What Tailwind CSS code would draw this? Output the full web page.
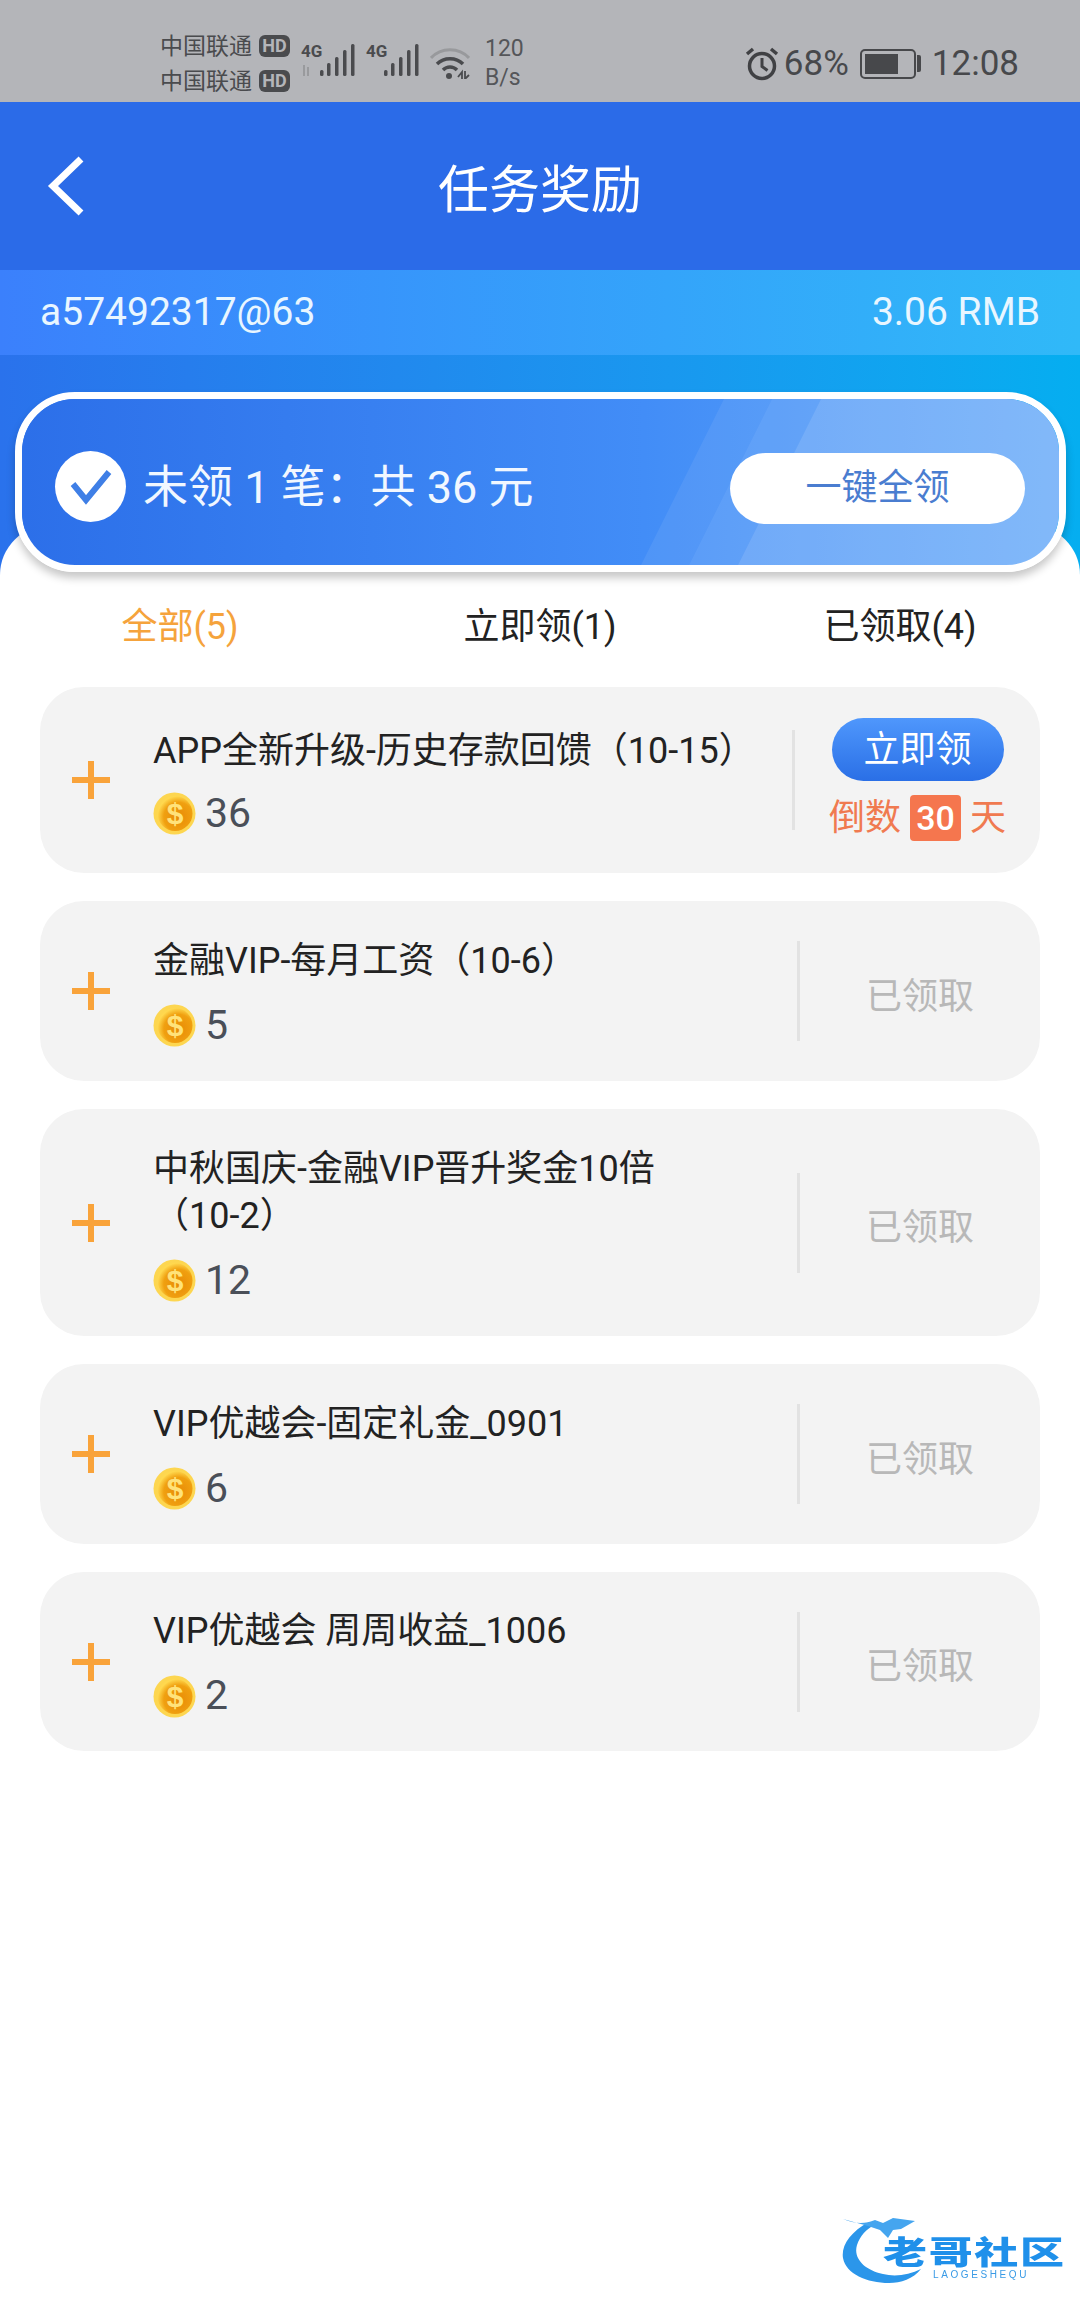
<!DOCTYPE html>
<html lang="zh-CN">
<head>
    <meta charset="UTF-8">
    <meta name="viewport" content="width=device-width, initial-scale=1.0">
    <title>任务奖励</title>
    <script src="https://cdn.jsdelivr.net/npm/@tailwindcss/browser@4"></script>
</head>
<body class="relative w-[1080px] h-[2310px] overflow-hidden bg-white font-['Roboto','Noto_Sans_CJK_SC',sans-serif]">

    <!-- coin, used by every row -->
    <svg class="absolute w-0 h-0">
        <defs>
            <radialGradient id="coinFill" cx="0.6" cy="0.6" r="0.6">
                <stop offset="0" stop-color="#e88a06" />
                <stop offset="0.7" stop-color="#f0a010" />
                <stop offset="1" stop-color="#ffd84e" />
            </radialGradient>
            <symbol id="coin" viewBox="0 0 43 43">
                <circle cx="21.5" cy="21.5" r="21" fill="#fdd650" />
                <circle cx="22" cy="21.5" r="17.5" fill="url(#coinFill)" />
                <text x="22" y="32" text-anchor="middle" font-family="Liberation Sans" font-weight="700" font-size="30" fill="#ffe27a">$</text>
            </symbol>
        </defs>
    </svg>

    <!-- status bar -->
    <div class="h-[102px] bg-[#b4b5b9] flex items-center justify-between pt-[23px] pl-[160px] pr-[61px] text-[#4a4b4e]">
        <div class="flex items-center">
            <div class="flex flex-col gap-[12px] pt-[2px]">
                <div class="flex items-center gap-[7px] h-[23px] text-[23px] leading-[23px]">中国联通
                    <span class="w-[31px] h-[22px] rounded-[6px] bg-[#4a4b4e] text-[#b4b5b9] text-[18px] leading-[22px] font-bold text-center">HD</span>
                </div>
                <div class="flex items-center gap-[7px] h-[23px] text-[23px] leading-[23px]">中国联通
                    <span class="w-[31px] h-[22px] rounded-[6px] bg-[#4a4b4e] text-[#b4b5b9] text-[18px] leading-[22px] font-bold text-center">HD</span>
                </div>
            </div>
            <div class="relative w-[54px] h-[40px] ml-[11px]">
                <span class="absolute left-0 top-[1px] text-[17px] leading-[15px] font-bold font-['Liberation_Sans_Narrow','Roboto',sans-serif]">4G</span>
                <svg class="absolute left-0 top-0" width="54" height="40" viewBox="0 0 54 40" fill="#4a4b4e">
                    <path d="M3 22v11M7 33v-9" stroke="#999a9d" stroke-width="2" fill="none" />
                    <rect x="19" y="27" width="3.5" height="6" rx="1.5" />
                    <rect x="26" y="20" width="3.5" height="13" rx="1.5" />
                    <rect x="34" y="14" width="3.5" height="19" rx="1.5" />
                    <rect x="42" y="7" width="3.5" height="26" rx="1.5" />
                    <rect x="50" y="1" width="3.5" height="32" rx="1.5" />
                </svg>
            </div>
            <div class="relative w-[53px] h-[40px] ml-[11px]">
                <span class="absolute left-0 top-[1px] text-[17px] leading-[15px] font-bold font-['Liberation_Sans_Narrow','Roboto',sans-serif]">4G</span>
                <svg class="absolute left-0 top-0" width="53" height="40" viewBox="0 0 53 40" fill="#4a4b4e">
                    <rect x="18" y="27" width="3.5" height="6" rx="1.5" />
                    <rect x="25" y="20" width="3.5" height="13" rx="1.5" />
                    <rect x="33" y="14" width="3.5" height="19" rx="1.5" />
                    <rect x="41" y="7" width="3.5" height="26" rx="1.5" />
                    <rect x="49" y="1" width="3.5" height="32" rx="1.5" />
                </svg>
            </div>
            <svg class="ml-[11px]" width="40" height="32" viewBox="0 0 40 32" fill="none">
                <path d="M1 11C11 0 29 0 39 11" stroke="#98999c" stroke-width="3" />
                <path d="M7 17c7-7 19-7 26 0" stroke="#4a4b4e" stroke-width="3.5" />
                <path d="M13 23c4-4 10-4 14 0" stroke="#4a4b4e" stroke-width="3.5" />
                <circle cx="19" cy="29" r="3" fill="#4a4b4e" />
                <path d="M28 30l4-5v7M35 24v8l4-4" stroke="#4a4b4e" stroke-width="1.8" />
            </svg>
            <div class="ml-[15px] flex flex-col text-[23px] leading-[29px] text-[#555659]">
                <span>120</span>
                <span>B/s</span>
            </div>
        </div>
        <div class="flex items-center mt-[2px]">
            <svg width="34" height="34" viewBox="0 0 34 34" fill="none" stroke="#404144">
                <circle cx="17" cy="19" r="12.5" stroke-width="3.5" />
                <path d="M17 11v8.5l5.5 4" stroke-width="3" />
                <path d="M2 7l6-5M32 7l-6-5" stroke-width="3.5" />
            </svg>
            <span class="ml-[5px] text-[35px] leading-[40px] text-[#47484b]">68%</span>
            <div class="ml-[11px] w-[56px] h-[30px] rounded-[5px] border-[2px] border-[#47484b] p-[3px]">
                <div class="w-[33px] h-full bg-[#47484b]"></div>
            </div>
            <div class="ml-[1px] w-[4px] h-[17px] rounded-r-[2px] bg-[#47484b]"></div>
            <span class="ml-[11px] text-[35px] leading-[40px] text-[#47484b]">12:08</span>
        </div>
    </div>

    <!-- header -->
    <header class="h-[168px] bg-[#2b6be8] flex items-center justify-center relative text-white">
        <svg class="absolute left-[46px] top-[54px]" width="40" height="60" viewBox="0 0 40 60" fill="none">
            <path d="M35 3 7 30l28 27" stroke="#fff" stroke-width="7" />
        </svg>
        <h1 class="pt-[9px] text-[51px] leading-[60px]">任务奖励</h1>
    </header>

    <!-- account bar -->
    <div class="h-[85px] bg-gradient-to-r from-[#3b80fc] to-[#30b9f8] flex items-center justify-between px-[40px] text-[39px] text-[#e9f6ff]">
        <span>a57492317@63</span>
        <span>3.06 RMB</span>
    </div>

    <!-- claim all banner -->
    <div class="bg-gradient-to-r from-[#2a72ec] to-[#05aef0] pt-[37px] pb-[5px] pl-[15px] pr-[14px]">
        <div class="relative z-10 h-[180px] rounded-[60px] border-[7px] border-white shadow-[0_6px_8px_rgba(0,0,0,0.22)]">
            <div class="relative h-full rounded-[53px] overflow-hidden bg-gradient-to-r from-[#2c6fe9] via-[#428df7] via-60% to-[#5fa5f8] flex items-center justify-between pt-[12px] pl-[33px] pr-[34px]">
                <svg class="absolute right-0 top-0" width="420" height="166" viewBox="0 0 420 166">
                    <path d="M2 166 85 0h48L50 166z" fill="#fff" fill-opacity="0.07" />
                    <path d="M50 166 133 0h49L99 166z" fill="#fff" fill-opacity="0.12" />
                    <path d="M99 166 182 0h238v166z" fill="#fff" fill-opacity="0.22" />
                </svg>
                <div class="relative flex items-center gap-[17px]">
                    <div class="-mt-[3px] w-[71px] h-[71px] rounded-full bg-white flex items-center justify-center">
                        <svg width="42" height="36" viewBox="0 0 42 36" fill="none">
                            <path d="M3 15 16 31 39 3" stroke="#3f7fe6" stroke-width="6" />
                        </svg>
                    </div>
                    <span class="text-[45px] leading-[48px] text-[#f1f7ff]">未领 1 笔：共 36 元</span>
                </div>
                <button class="relative w-[295px] h-[71px] rounded-full bg-white text-[36px] text-[#4a7dd0]">一键全领</button>
            </div>
        </div>
    </div>

    <!-- list sheet -->
    <main class="relative -mt-[52px] rounded-t-[50px] bg-white px-[40px] pt-[77px]">
        <div class="-mx-[40px] grid grid-cols-3 text-center text-[36px] leading-[50px] text-[#222]">
            <span class="text-[#f5a33c]">全部(5)</span>
            <span>立即领(1)</span>
            <span>已领取(4)</span>
        </div>

        <div class="mt-[35px] flex flex-col gap-[28px]">
            <div class="flex items-center h-[186px] rounded-[44px] bg-[#f3f3f3]">
                <div class="relative w-[38px] h-[38px] ml-[32px] shrink-0">
                    <div class="absolute left-0 top-[16px] w-[38px] h-[6px] bg-[#f9a33a]"></div>
                    <div class="absolute left-[16px] top-0 w-[6px] h-[38px] bg-[#f9a33a]"></div>
                </div>
                <div class="ml-[43px] w-[639px] shrink-0">
                    <p class="pt-[2px] text-[36px] leading-[47px] text-[#222]">APP全新升级-历史存款回馈（10-15）</p>
                    <div class="mt-[18px] flex items-center gap-[9px] h-[42px] text-[41px] text-[#4a4f58]">
                        <svg width="43" height="43"><use href="#coin" /></svg>
                        <span>36</span>
                    </div>
                </div>
                <div class="w-[3px] h-[100px] bg-[#e2e2e2]"></div>
                <div class="flex-1 flex flex-col items-center">
                    <button class="mt-[3px] w-[172px] h-[63px] rounded-full bg-gradient-to-b from-[#4f97fc] to-[#2a6fe6] text-[36px] text-white">立即领</button>
                    <div class="mt-[10px] flex items-center gap-[9px] text-[36px] text-[#f07a50]">
                        <span>倒数</span>
                        <span class="w-[51px] h-[46px] rounded-[4px] bg-[#f5764e] text-[34px] leading-[46px] font-medium text-center text-white">30</span>
                        <span>天</span>
                    </div>
                </div>
            </div>

            <div class="flex items-center h-[180px] rounded-[44px] bg-[#f3f3f3]">
                <div class="relative w-[38px] h-[38px] ml-[32px] shrink-0">
                    <div class="absolute left-0 top-[16px] w-[38px] h-[6px] bg-[#f9a33a]"></div>
                    <div class="absolute left-[16px] top-0 w-[6px] h-[38px] bg-[#f9a33a]"></div>
                </div>
                <div class="ml-[43px] w-[644px] shrink-0">
                    <p class="pt-[2px] text-[36px] leading-[47px] text-[#222]">金融VIP-每月工资（10-6）</p>
                    <div class="mt-[20px] flex items-center gap-[9px] h-[42px] text-[41px] text-[#4a4f58]">
                        <svg width="43" height="43"><use href="#coin" /></svg>
                        <span>5</span>
                    </div>
                </div>
                <div class="w-[3px] h-[100px] bg-[#e2e2e2]"></div>
                <div class="flex-1 pt-[11px] text-center text-[36px] text-[#b8b8b8]">已领取</div>
            </div>

            <div class="flex items-center h-[227px] rounded-[44px] bg-[#f3f3f3]">
                <div class="relative w-[38px] h-[38px] ml-[32px] shrink-0">
                    <div class="absolute left-0 top-[16px] w-[38px] h-[6px] bg-[#f9a33a]"></div>
                    <div class="absolute left-[16px] top-0 w-[6px] h-[38px] bg-[#f9a33a]"></div>
                </div>
                <div class="ml-[43px] w-[644px] shrink-0">
                    <p class="pt-[2px] text-[36px] leading-[47px] text-[#222]">中秋国庆-金融VIP晋升奖金10倍<br>（10-2）</p>
                    <div class="mt-[20px] flex items-center gap-[9px] h-[42px] text-[41px] text-[#4a4f58]">
                        <svg width="43" height="43"><use href="#coin" /></svg>
                        <span>12</span>
                    </div>
                </div>
                <div class="w-[3px] h-[100px] bg-[#e2e2e2]"></div>
                <div class="flex-1 pt-[11px] text-center text-[36px] text-[#b8b8b8]">已领取</div>
            </div>

            <div class="flex items-center h-[180px] rounded-[44px] bg-[#f3f3f3]">
                <div class="relative w-[38px] h-[38px] ml-[32px] shrink-0">
                    <div class="absolute left-0 top-[16px] w-[38px] h-[6px] bg-[#f9a33a]"></div>
                    <div class="absolute left-[16px] top-0 w-[6px] h-[38px] bg-[#f9a33a]"></div>
                </div>
                <div class="ml-[43px] w-[644px] shrink-0">
                    <p class="pt-[2px] text-[36px] leading-[47px] text-[#222]">VIP优越会-固定礼金_0901</p>
                    <div class="mt-[20px] flex items-center gap-[9px] h-[42px] text-[41px] text-[#4a4f58]">
                        <svg width="43" height="43"><use href="#coin" /></svg>
                        <span>6</span>
                    </div>
                </div>
                <div class="w-[3px] h-[100px] bg-[#e2e2e2]"></div>
                <div class="flex-1 pt-[11px] text-center text-[36px] text-[#b8b8b8]">已领取</div>
            </div>

            <div class="flex items-center h-[179px] rounded-[44px] bg-[#f3f3f3]">
                <div class="relative w-[38px] h-[38px] ml-[32px] shrink-0">
                    <div class="absolute left-0 top-[16px] w-[38px] h-[6px] bg-[#f9a33a]"></div>
                    <div class="absolute left-[16px] top-0 w-[6px] h-[38px] bg-[#f9a33a]"></div>
                </div>
                <div class="ml-[43px] w-[644px] shrink-0">
                    <p class="pt-[2px] text-[36px] leading-[47px] text-[#222]">VIP优越会 周周收益_1006</p>
                    <div class="mt-[20px] flex items-center gap-[9px] h-[42px] text-[41px] text-[#4a4f58]">
                        <svg width="43" height="43"><use href="#coin" /></svg>
                        <span>2</span>
                    </div>
                </div>
                <div class="w-[3px] h-[100px] bg-[#e2e2e2]"></div>
                <div class="flex-1 pt-[11px] text-center text-[36px] text-[#b8b8b8]">已领取</div>
            </div>
        </div>
    </main>

    <!-- watermark -->
    <div class="absolute left-[842px] top-[2214px] w-[222px] h-[72px] blur-[0.6px]">
        <svg class="absolute left-0 top-0" width="100" height="72" viewBox="0 0 100 72" fill="none">
            <path d="M27 8C8 18-1 32 1 44c3 16 24 25 46 25 12 0 24-4 32-14-12 6-26 8-38 5C22 56 11 44 15 31 18 22 24 15 34 10z" fill="#2b96ea" />
            <path d="M1 5c12 5 22 5 32 1l8 3 10-5 22 3-14 8-8 1-5 8-8-8-12-4z" fill="#45a5ef" />
        </svg>
        <div class="absolute left-[41px] top-[21px] w-[181px] h-[36px] flex justify-between text-[44px] leading-[36px] font-black text-[#1f90ea] scale-y-[0.72]">
            <span>老</span><span>哥</span><span>社</span><span>区</span>
        </div>
        <span class="absolute left-[91px] top-[56px] text-[10px] leading-[10px] tracking-[2.6px] text-[#3a9be6] font-['Liberation_Sans',sans-serif]">LAOGESHEQU</span>
    </div>
</body>
</html>
